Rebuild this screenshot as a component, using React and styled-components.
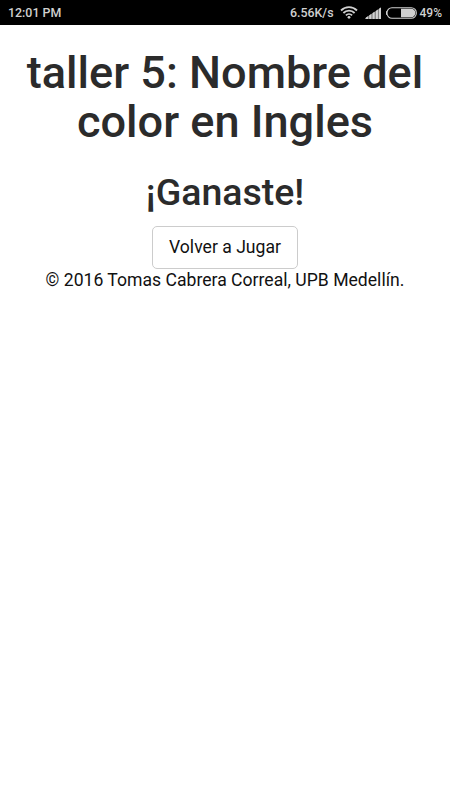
import React from "react";
import styled, { createGlobalStyle } from "styled-components";

const GlobalStyle = createGlobalStyle`
  * {
    box-sizing: border-box;
  }

  body {
    margin: 0;
    background: #fff;
    color: #111;
    font-family: Roboto, sans-serif;
  }
`;

const StatusBar = styled.header`
  display: flex;
  align-items: center;
  justify-content: space-between;
  height: 25px;
  padding: 0 8px;
  background: #000;
  color: #d0d0d0;
  font-size: 12.4px;
  font-weight: 500;
`;

const StatusGroup = styled.div`
  display: flex;
  align-items: center;

  svg {
    display: block;
  }
`;

const StatusIcon = styled.svg`
  margin-left: ${(props) => props.$gap}px;
`;

const Percent = styled.span`
  margin-left: 3px;
  font-size: 12px;
`;

const Content = styled.main`
  padding: 23px 20px 0;
  text-align: center;
`;

const Title = styled.h1`
  margin: 0;
  color: #2b2b2b;
  font-size: 45.1px;
  font-weight: 500;
  line-height: 49px;
`;

const Result = styled.h2`
  margin: 26px 0 13px;
  color: #2b2b2b;
  font-size: 37.5px;
  font-weight: 500;
  line-height: 41px;
`;

const PlayButton = styled.button`
  display: block;
  width: 146px;
  height: 43px;
  margin: 0 auto;
  padding: 0 0 2px;
  border: 1px solid #ccc;
  border-radius: 5px;
  background: #fff;
  color: #111;
  font-family: inherit;
  font-size: 17.6px;
`;

const Credits = styled.p`
  margin: 0;
  font-size: 17.6px;
  line-height: 23px;
`;

function WifiIcon() {
  return (
    <StatusIcon $gap={6} width="18" height="13" viewBox="0 0 18 13" fill="none" stroke="#d0d0d0" strokeWidth="1.8">
      <path d="M1 4.5a11.4 11.4 0 0 1 16 0M3.4 7a7.9 7.9 0 0 1 11.2 0M5.9 9.4a4.4 4.4 0 0 1 6.2 0" />
      <circle cx="9" cy="11.3" r="1.4" fill="#d0d0d0" stroke="none" />
    </StatusIcon>
  );
}

function SignalIcon() {
  return (
    <StatusIcon $gap={7} width="16" height="12" viewBox="0 0 16 12">
      <path d="M0 12v-.8L16 .5V12z" fill="#808080" />
      <path d="M1 12v-1.5l2-1.3V12zM4.3 12V8.3l2-1.3v5zM7.6 12V6.1l2-1.3V12zM10.9 12V3.9l2-1.3V12zM14 12V1.8L16 .5V12z" fill="#d0d0d0" />
    </StatusIcon>
  );
}

function BatteryIcon() {
  return (
    <StatusIcon $gap={5} width="31" height="12" viewBox="0 0 31 12">
      <rect x="1" y=".7" width="29.3" height="10.6" rx="5" fill="none" stroke="#d0d0d0" strokeWidth="1.1" />
      <path d="M.5 4.2v3.6" stroke="#d0d0d0" />
      <path d="M15 1.8h10.2a4.2 4.2 0 0 1 0 8.4H15z" fill="#d0d0d0" />
    </StatusIcon>
  );
}

function App() {
  return (
    <>
      <GlobalStyle />
      <StatusBar>
        <span>12:01 PM</span>
        <StatusGroup>
          <span>6.56K/s</span>
          <WifiIcon />
          <SignalIcon />
          <BatteryIcon />
          <Percent>49%</Percent>
        </StatusGroup>
      </StatusBar>
      <Content>
        <Title>taller 5: Nombre del color en Ingles</Title>
        <Result>¡Ganaste!</Result>
        <PlayButton>Volver a Jugar</PlayButton>
        <Credits>© 2016 Tomas Cabrera Correal, UPB Medellín.</Credits>
      </Content>
    </>
  );
}

export default App;
